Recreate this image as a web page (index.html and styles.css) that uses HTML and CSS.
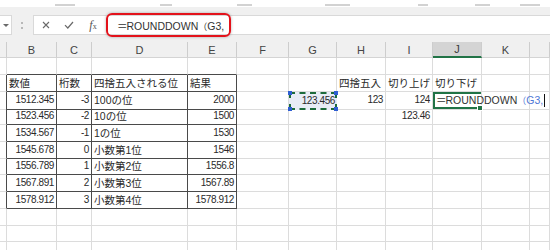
FILE: index.html
```html
<!DOCTYPE html>
<html lang="ja">
<head>
    <meta charset="UTF-8">
    <meta name="viewport" content="width=device-width, initial-scale=1.0">
    <title>ROUNDDOWN</title>
    <link rel="stylesheet" href="styles.css">
</head>
<body>

<div class="ribbon">
    <span></span><span></span><span></span><span></span><span></span><span></span><span></span>
</div>

<div class="fbar">
    <div class="namebox"><span class="arrow"></span></div>
    <div class="grip"></div>
    <div class="fx-input">
        <span class="ico">
            <svg width="8" height="8" viewBox="0 0 8 8"><path d="M1 1L7 7M7 1L1 7" stroke="#6a6a6a" stroke-width="1.1" fill="none"/></svg>
        </span>
        <span class="ico">
            <svg width="10" height="8" viewBox="0 0 10 8"><path d="M1 4.2L3.8 7L9 1" stroke="#6a6a6a" stroke-width="1.2" fill="none"/></svg>
        </span>
        <span class="ico fx"><i>f</i><small>x</small></span>
        <div class="hl"><span class="formula"><span class="eq">＝</span>ROUNDDOWN<span class="par">（</span>G3,</span></div>
    </div>
</div>

<div class="sheet">
    <div class="row hdr">
        <div class="h"></div><div class="h">B</div><div class="h">C</div><div class="h">D</div><div class="h">E</div><div class="h">F</div>
        <div class="h">G</div><div class="h">H</div><div class="h">I</div><div class="h sel">J</div><div class="h">K</div><div class="h"></div>
    </div>
    <div class="row">
        <div class="c"></div><div class="c tt"></div><div class="c tt"></div><div class="c tt"></div><div class="c tt"></div><div class="c"></div>
        <div class="c"></div><div class="c"></div><div class="c"></div><div class="c"></div><div class="c"></div><div class="c"></div>
    </div>
    <div class="row">
        <div class="c tl"></div><div class="c t">数値</div><div class="c t">桁数</div><div class="c t">四捨五入される位</div><div class="c t">結果</div><div class="c"></div>
        <div class="c"></div><div class="c">四捨五入</div><div class="c">切り上げ</div><div class="c">切り下げ</div><div class="c"></div><div class="c"></div>
    </div>
    <div class="row">
        <div class="c tl"></div><div class="c t n">1512.345</div><div class="c t n">-3</div><div class="c t">100の位</div><div class="c t n">2000</div><div class="c"></div>
        <div class="c n ref">123.456<span class="k k1"></span><span class="k k2"></span><span class="k k3"></span><span class="k k4"></span></div>
        <div class="c n">123</div><div class="c n">124</div>
        <div class="c active"><span class="formula"><span class="eq">＝</span>ROUNDDOWN<span class="arg"><span class="par">（</span>G3,</span></span><span class="caret"></span></div>
        <div class="c"></div><div class="c"></div>
    </div>
    <div class="row">
        <div class="c tl"></div><div class="c t n">1523.456</div><div class="c t n">-2</div><div class="c t">10の位</div><div class="c t n">1500</div><div class="c"></div>
        <div class="c"></div><div class="c"></div><div class="c n">123.46</div><div class="c"></div><div class="c"></div><div class="c"></div>
    </div>
    <div class="row">
        <div class="c tl"></div><div class="c t n">1534.567</div><div class="c t n">-1</div><div class="c t">1の位</div><div class="c t n">1530</div><div class="c"></div>
        <div class="c"></div><div class="c"></div><div class="c"></div><div class="c"></div><div class="c"></div><div class="c"></div>
    </div>
    <div class="row">
        <div class="c tl"></div><div class="c t n">1545.678</div><div class="c t n">0</div><div class="c t">小数第1位</div><div class="c t n">1546</div><div class="c"></div>
        <div class="c"></div><div class="c"></div><div class="c"></div><div class="c"></div><div class="c"></div><div class="c"></div>
    </div>
    <div class="row">
        <div class="c tl"></div><div class="c t n">1556.789</div><div class="c t n">1</div><div class="c t">小数第2位</div><div class="c t n">1556.8</div><div class="c"></div>
        <div class="c"></div><div class="c"></div><div class="c"></div><div class="c"></div><div class="c"></div><div class="c"></div>
    </div>
    <div class="row">
        <div class="c tl"></div><div class="c t n">1567.891</div><div class="c t n">2</div><div class="c t">小数第3位</div><div class="c t n">1567.89</div><div class="c"></div>
        <div class="c"></div><div class="c"></div><div class="c"></div><div class="c"></div><div class="c"></div><div class="c"></div>
    </div>
    <div class="row">
        <div class="c tl"></div><div class="c t n">1578.912</div><div class="c t n">3</div><div class="c t">小数第4位</div><div class="c t n">1578.912</div><div class="c"></div>
        <div class="c"></div><div class="c"></div><div class="c"></div><div class="c"></div><div class="c"></div><div class="c"></div>
    </div>
    <div class="row">
        <div class="c"></div><div class="c"></div><div class="c"></div><div class="c"></div><div class="c"></div><div class="c"></div>
        <div class="c"></div><div class="c"></div><div class="c"></div><div class="c"></div><div class="c"></div><div class="c"></div>
    </div>
    <div class="row">
        <div class="c"></div><div class="c"></div><div class="c"></div><div class="c"></div><div class="c"></div><div class="c"></div>
        <div class="c"></div><div class="c"></div><div class="c"></div><div class="c"></div><div class="c"></div><div class="c"></div>
    </div>
    <div class="row">
        <div class="c"></div><div class="c"></div><div class="c"></div><div class="c"></div><div class="c"></div><div class="c"></div>
        <div class="c"></div><div class="c"></div><div class="c"></div><div class="c"></div><div class="c"></div><div class="c"></div>
    </div>
</div>

</body>
</html>
```

FILE: styles.css
```css
body {
    margin: 0;
    width: 550px;
    height: 250px;
    overflow: hidden;
    background-color: #fff;
    font-family: "Liberation Sans", "Noto Sans CJK JP", sans-serif;
    color: #2a2a2a;
}

/* bottom edge of the ribbon labels */
.ribbon {
    height: 7px;
    display: flex;
    align-items: flex-end;
}

.ribbon span {
    height: 2px;
    margin-bottom: 1px;
    background-color: #d2d2d2;
}

.ribbon span:nth-child(1) { margin-left: 55px; width: 20px; }
.ribbon span:nth-child(2) { margin-left: 85px; width: 12px; }
.ribbon span:nth-child(3) { margin-left: 65px; width: 15px; }
.ribbon span:nth-child(4) { margin-left: 73px; width: 25px; }
.ribbon span:nth-child(5) { margin-left: 68px; width: 10px; }
.ribbon span:nth-child(6) { margin-left: 47px; width: 15px; }
.ribbon span:nth-child(7) { margin-left: 30px; width: 20px; }

/* formula bar */
.fbar {
    display: flex;
    height: 20px;
    padding: 8px 0 7px;
    background-color: #f0f0f0;
}

.namebox {
    width: 12px;
    box-sizing: border-box;
    background-color: #fff;
    border: 1px solid #d9d9d9;
    border-left: none;
    display: flex;
    align-items: center;
    justify-content: center;
}

.arrow {
    width: 0;
    height: 0;
    border-left: 3px solid transparent;
    border-right: 3px solid transparent;
    border-top: 3px solid #6a6a6a;
}

.grip {
    width: 0;
    height: 7px;
    align-self: center;
    margin: 0 10px 0 9px;
    border-left: 2px dotted #b8b8b8;
}

.fx-input {
    flex: 1;
    display: flex;
    align-items: center;
    box-sizing: border-box;
    background-color: #fff;
    border: 1px solid #d9d9d9;
    border-right: none;
}

.ico {
    width: 23px;
    display: flex;
    justify-content: center;
}

.fx {
    width: 26px;
    font-family: "Liberation Serif", serif;
    font-size: 12px;
    color: #555;
}

.fx small {
    font-size: 8px;
    margin-top: 4px;
}

.hl {
    width: 125px;
    height: 24px;
    box-sizing: border-box;
    flex-shrink: 0;
    padding-left: 9px;
    display: flex;
    align-items: center;
    border: 2px solid #e3121b;
    border-radius: 6px;
    box-shadow: 0 0 3px rgba(0, 0, 0, 0.3);
    color: #333;
}

.formula {
    flex-shrink: 0;
    white-space: nowrap;
    font-size: 10.5px;
}

.eq {
    letter-spacing: -1px;
}

.par {
    font-size: 9px;
}

/* sheet grid */
.row {
    display: grid;
    grid-template-columns: 7px 50px 35px 96px 49px 52px 48px 49px 47px 49px 48px 20px;
    height: 16.75px;
}

.hdr {
    height: 16px;
    background-color: #f0f0f0;
}

.h {
    box-sizing: border-box;
    border-right: 1px solid #cdcdcd;
    border-bottom: 1px solid #d4d4d4;
    display: flex;
    align-items: center;
    justify-content: center;
    font-size: 11px;
    color: #444;
}

.h.sel {
    background-color: #d4d4d4;
    border-bottom: 2px solid #217346;
    color: #3a3a3a;
}

.c {
    box-sizing: border-box;
    border-right: 1px solid #dcdcdc;
    border-bottom: 1px solid #dcdcdc;
    padding: 0 2px;
    display: flex;
    align-items: center;
    white-space: nowrap;
    overflow: hidden;
    font-size: 10.5px;
    line-height: 14px;
}

.n {
    justify-content: flex-end;
    font-size: 10px;
    letter-spacing: -0.4px;
}

.t {
    border-right-color: #4a4a4a;
    border-bottom-color: #4a4a4a;
}

.tt {
    border-bottom-color: #4a4a4a;
}

.tl {
    border-right-color: #4a4a4a;
}

.ref {
    position: relative;
    overflow: visible;
    padding-right: 0;
    border: 2px dashed #1d6b3b;
    background-color: #e8ecf6;
}

.k {
    position: absolute;
    width: 4px;
    height: 4px;
    background-color: #2f5fd3;
}

.k1 { left: -3px; top: -3px; }
.k2 { right: -3px; top: -3px; }
.k3 { left: -3px; bottom: -3px; }
.k4 { right: -3px; bottom: -3px; }

.active {
    position: relative;
    z-index: 2;
    overflow: visible;
    padding-left: 3px;
    color: #333;
    box-shadow: inset 2px 0 0 #217346, inset 0 2px 0 #217346, inset 0 -2px 0 #217346;
}

.active::after {
    content: "";
    position: absolute;
    right: -2px;
    bottom: -2px;
    width: 4px;
    height: 4px;
    background-color: #217346;
    border: 1px solid #fff;
}

.arg {
    color: #4f78d6;
}

.caret {
    flex-shrink: 0;
    width: 1px;
    height: 13px;
    margin-left: 1px;
    background-color: #111;
}
```
